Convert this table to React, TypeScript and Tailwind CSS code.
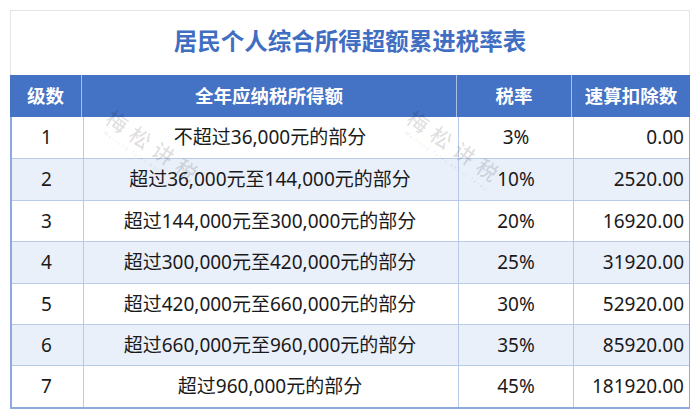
import React from 'react';

type Row = { level: string; range: string; rate: string; deduction: string };

const rows: Row[] = [
  { level: '1', range: '不超过36,000元的部分', rate: '3%', deduction: '0.00' },
  { level: '2', range: '超过36,000元至144,000元的部分', rate: '10%', deduction: '2520.00' },
  { level: '3', range: '超过144,000元至300,000元的部分', rate: '20%', deduction: '16920.00' },
  { level: '4', range: '超过300,000元至420,000元的部分', rate: '25%', deduction: '31920.00' },
  { level: '5', range: '超过420,000元至660,000元的部分', rate: '30%', deduction: '52920.00' },
  { level: '6', range: '超过660,000元至960,000元的部分', rate: '35%', deduction: '85920.00' },
  { level: '7', range: '超过960,000元的部分', rate: '45%', deduction: '181920.00' },
];

const cols = 'grid grid-cols-[72px_375px_115px_1fr]';

// faint diagonal "梅松讲税" stamp that sits over the first rows
function Watermark({ className }: { className: string }) {
  return (
    <div
      className={`pointer-events-none absolute flex flex-col items-center rotate-[35deg] select-none ${className}`}
    >
      <span className="text-[21px] font-medium tracking-[7px] leading-none text-black/[0.13]">梅松讲税</span>
      <span className="mt-[3px] text-[5px] tracking-[1.5px] leading-none text-black/[0.12]">
        Meisong Talks About Taxes
      </span>
    </div>
  );
}

export default function App() {
  return (
    <div
      className="w-[700px] h-[417px] bg-white pt-[10px] pl-[10px]"
      style={{ fontFamily: '"Noto Sans", "Noto Sans CJK SC", sans-serif' }}
    >
      <div className="relative w-[680px]">
        {/* Title */}
        <div className="h-[65px] border border-b-0 border-[#e4e4e4] flex items-center justify-center">
          <h1 className="text-[23.5px] font-bold text-[#3f6ec3] mb-[2px]">居民个人综合所得超额累进税率表</h1>
        </div>

        {/* Header */}
        <div className={`${cols} h-[42px] bg-[#4472c4] text-white text-[18.5px] font-bold`}>
          <div className="flex items-center justify-center border-r border-[#a9bde6]">级数</div>
          <div className="flex items-center justify-center border-r border-[#a9bde6]">全年应纳税所得额</div>
          <div className="flex items-center justify-center border-r border-[#a9bde6]">税率</div>
          <div className="flex items-center justify-center">速算扣除数</div>
        </div>

        {/* Body */}
        <div className="border-l-2 border-r border-b-2 border-[#8eaadc] text-[19px] text-[#1a1a1a]">
          {rows.map((r, i) => (
            <div
              key={r.level}
              className={`${cols} h-[41.4px] ${i > 0 ? 'border-t border-[#b8c9ea]' : ''} ${
                i % 2 === 1 ? 'bg-[#eaf0fa]' : 'bg-white'
              }`}
            >
              <div className="flex items-center justify-center border-r border-[#b8c9ea] -ml-[2px]">{r.level}</div>
              <div className="flex items-center justify-center border-r border-[#b8c9ea] pr-[2px]">{r.range}</div>
              <div className="flex items-center justify-center border-r border-[#b8c9ea]">{r.rate}</div>
              <div className="flex items-center justify-end pr-[5px]">{r.deduction}</div>
            </div>
          ))}
        </div>

        <Watermark className="left-[86px] top-[127px]" />
        <Watermark className="left-[387px] top-[127px]" />
      </div>
    </div>
  );
}
